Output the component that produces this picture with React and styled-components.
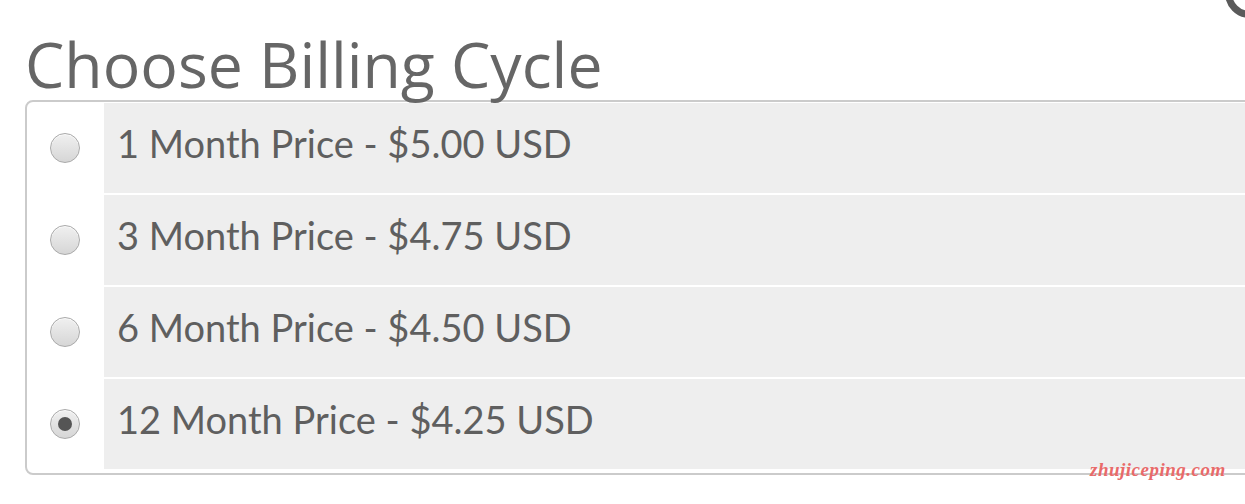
import React from 'react';
import styled, { createGlobalStyle } from 'styled-components';

const GlobalStyle = createGlobalStyle`
  html, body {
    margin: 0;
    padding: 0;
    background: #fff;
    overflow: hidden;
  }
`;

const Page = styled.div`
  position: relative;
  width: 1245px;
  height: 504px;
  overflow: hidden;
  padding-left: 25px;
  box-sizing: border-box;
`;

const Title = styled.h1`
  margin: 0;
  padding-top: 33px;
  height: 100px;
  box-sizing: border-box;
  font-family: 'Open Sans', sans-serif;
  font-weight: 400;
  font-size: 62.5px;
  line-height: 62px;
  color: #666;
  white-space: nowrap;
`;

const Box = styled.div`
  width: 1300px;
  border: 2px solid #cbcbcb;
  border-radius: 8px;
  padding: 1px 0 4px 0;
  display: flex;
  flex-direction: column;
  gap: 2px;
  background: #fff;
`;

const Row = styled.label`
  display: grid;
  grid-template-columns: 77px 1fr;
  height: 90px;
`;

const RadioCell = styled.div`
  display: flex;
  align-items: center;
  justify-content: center;
  padding-right: 2px;
`;

const Radio = styled.span`
  width: 30px;
  height: 30px;
  box-sizing: border-box;
  border-radius: 50%;
  border: 1px solid #aaa;
  background: linear-gradient(#f0f0f0, #d6d6d6);
  box-shadow: inset 0 1px 1px rgba(255, 255, 255, 0.8);
  display: flex;
  align-items: center;
  justify-content: center;

  &::after {
    content: '';
    width: 14px;
    height: 14px;
    border-radius: 50%;
    background: #555;
    display: ${p => (p.$checked ? 'block' : 'none')};
  }
`;

const LabelCell = styled.div`
  background: #eee;
  display: flex;
  align-items: center;
  padding-left: 13px;
  font-family: 'Lato', sans-serif;
  font-size: 38px;
  color: #5f5f5f;
  white-space: nowrap;
  padding-bottom: 10px;
`;

const Watermark = styled.span`
  position: absolute;
  left: 1090px;
  top: 459px;
  font-family: 'Liberation Serif', serif;
  font-style: italic;
  font-weight: bold;
  font-size: 19px;
  color: #e96a6a;
  letter-spacing: 0.5px;
`;

const CornerRing = styled.span`
  position: absolute;
  right: -30px;
  top: -32px;
  width: 36px;
  height: 36px;
  border-radius: 50%;
  border: 7px solid #5a5a5a;
`;

const options = [
  { label: '1 Month Price - $5.00 USD', checked: false },
  { label: '3 Month Price - $4.75 USD', checked: false },
  { label: '6 Month Price - $4.50 USD', checked: false },
  { label: '12 Month Price - $4.25 USD', checked: true },
];

export default function App() {
  return (
    <>
      <GlobalStyle />
      <Page>
        <CornerRing />
        <Title>Choose Billing Cycle</Title>
        <Box>
          {options.map(o => (
            <Row key={o.label}>
              <RadioCell>
                <Radio $checked={o.checked} />
              </RadioCell>
              <LabelCell>{o.label}</LabelCell>
            </Row>
          ))}
        </Box>
        <Watermark>zhujiceping.com</Watermark>
      </Page>
    </>
  );
}
